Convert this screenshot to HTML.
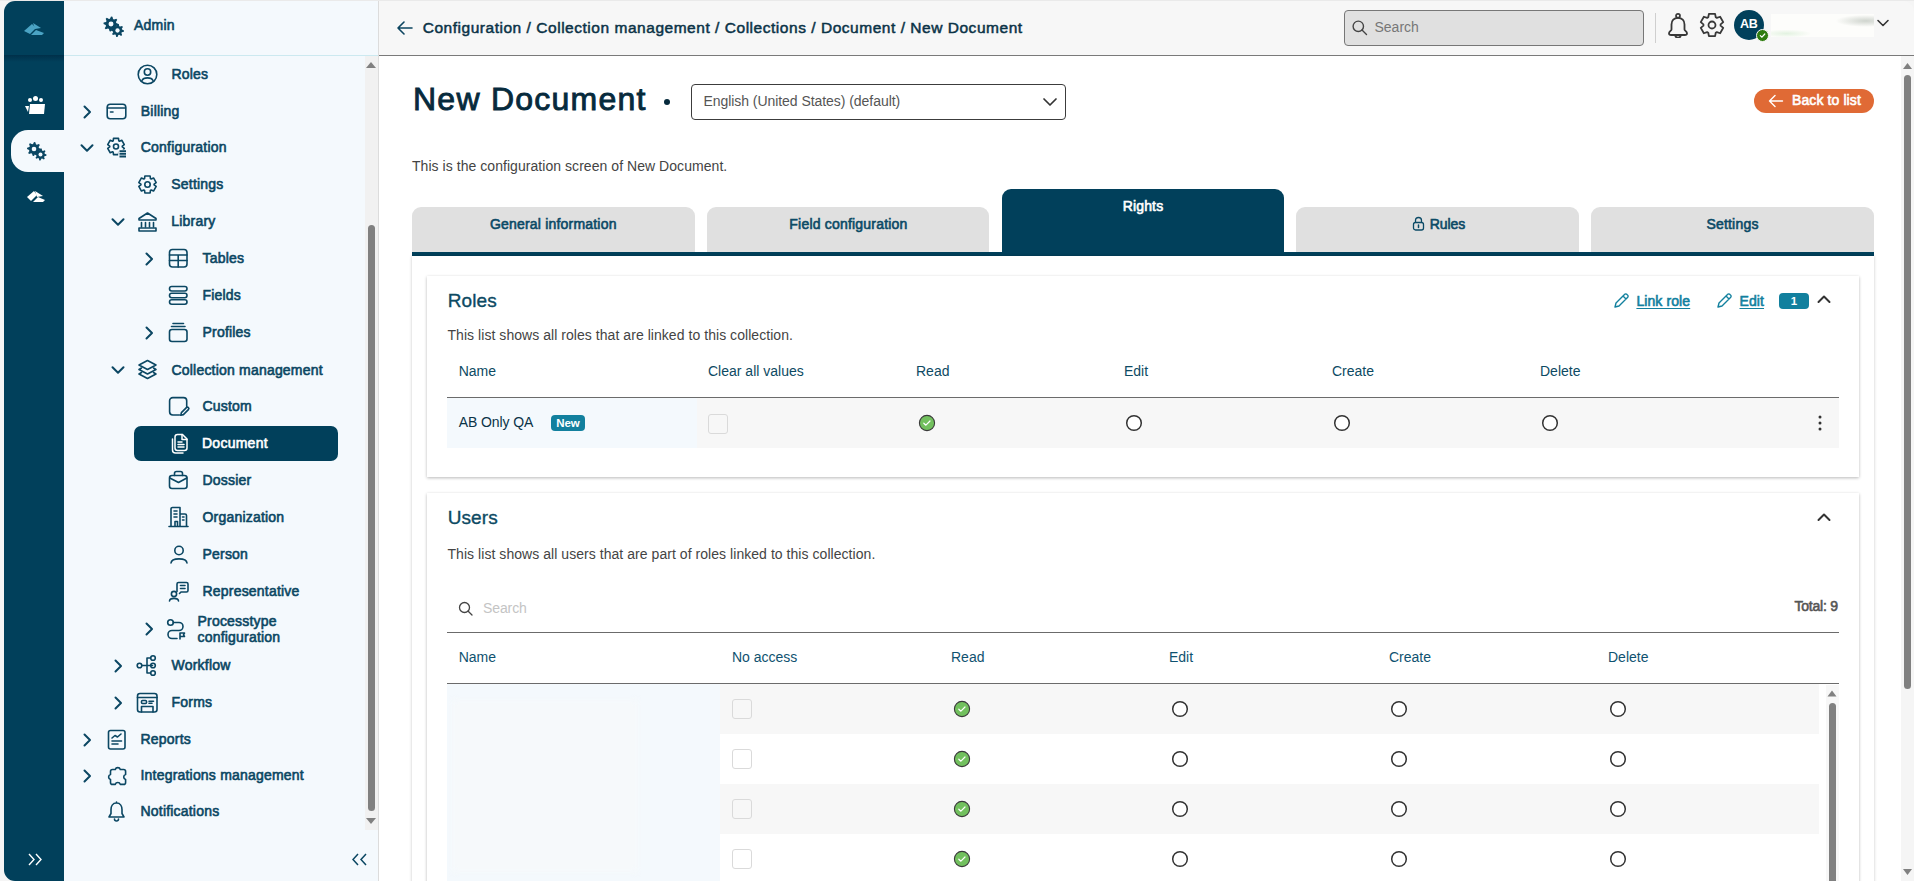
<!DOCTYPE html>
<html><head><meta charset="utf-8"><style>
html,body{margin:0;padding:0;}
body{width:1914px;height:881px;overflow:hidden;position:relative;background:#f5f5f5;font-family:"Liberation Sans", sans-serif;}
.t{position:absolute;white-space:nowrap;}
.r{position:absolute;display:block;}
</style></head><body>
<div class="r" style="left:0px;top:0px;width:1914px;height:1px;background:#eaeaea;"></div><div class="r" style="left:4px;top:1px;width:60px;height:880px;background:#01405b;border-radius:11px 0 0 11px;"></div><div class="r" style="left:4px;top:55px;width:60px;height:7px;background:linear-gradient(#00304a,rgba(1,64,91,0));"></div><div class="r" style="left:64px;top:1px;width:314px;height:880px;background:#f4f9fd;"></div><div class="r" style="left:64px;top:55px;width:314px;height:1px;background:#cce9f0;"></div><div class="r" style="left:378px;top:1px;width:1px;height:880px;background:#dcdcdc;"></div><div class="r" style="left:11px;top:130px;width:53px;height:42px;background:#f4f9fd;border-radius:17px 0 0 17px;"></div><div class="r" style="left:379px;top:1px;width:1535px;height:54px;background:#f7f7f7;border-radius:0 11px 0 0;"></div><div class="r" style="left:379px;top:55px;width:1535px;height:1px;background:#7a7a7a;"></div><div class="r" style="left:379px;top:56px;width:1535px;height:825px;background:#fff;"></div><div class="r" style="left:1901px;top:56px;width:13px;height:825px;background:#f5f5f5;"></div><svg class="r" style="left:1903px;top:63px;" width="9" height="6" viewBox="0 0 9 6"><path d="M4.5 0 L9 6 L0 6Z" fill="#808080"/></svg><div class="r" style="left:1904px;top:75px;width:7px;height:614px;background:#808080;border-radius:4px;"></div><svg class="r" style="left:1903px;top:869px;" width="9" height="6" viewBox="0 0 9 6"><path d="M0 0 L9 0 L4.5 6Z" fill="#808080"/></svg><div class="r" style="left:365px;top:56px;width:13px;height:774px;background:#f1f1f1;"></div><svg class="r" style="left:366px;top:62px;" width="10" height="6" viewBox="0 0 10 6"><path d="M5 0 L10 6 L0 6Z" fill="#808080"/></svg><div class="r" style="left:368px;top:225px;width:7px;height:586px;background:#808080;border-radius:4px;"></div><svg class="r" style="left:366px;top:818px;" width="10" height="6" viewBox="0 0 10 6"><path d="M0 0 L10 0 L5 6Z" fill="#808080"/></svg><svg class="r" style="left:23px;top:22px;" width="22" height="14" viewBox="0 0 22 14"><path d="M1 9 L9 2 L13 6 L7 12Z" fill="#4aa3c4"/><path d="M10 1 L18 6 L12 7Z" fill="#4aa3c4"/><path d="M8 13 L13 8 L21 11 L19 13Z" fill="#4aa3c4"/></svg><svg class="r" style="left:25px;top:96px;" width="21" height="19" viewBox="0 0 21 19"><circle cx="5" cy="4" r="2" fill="#fff"/><circle cx="10.5" cy="2.5" r="2.5" fill="#fff"/><circle cx="16" cy="4" r="2" fill="#fff"/><path d="M5 8 H20 L19 18 H4Z" fill="#fff"/><path d="M0 10 L4 10 L3 16Z" fill="#fff"/></svg><svg class="r" style="left:27px;top:142px;" width="20" height="19" viewBox="0 0 20 19"><polygon points="14.00,7.00 13.87,8.37 11.66,8.93 11.19,9.80 11.95,11.95 10.89,12.82 8.93,11.66 7.98,11.94 7.00,14.00 5.63,13.87 5.07,11.66 4.20,11.19 2.05,11.95 1.18,10.89 2.34,8.93 2.06,7.98 0.00,7.00 0.13,5.63 2.34,5.07 2.81,4.20 2.05,2.05 3.11,1.18 5.07,2.34 6.02,2.06 7.00,0.00 8.37,0.13 8.93,2.34 9.80,2.81 11.95,2.05 12.82,3.11 11.66,5.07 11.94,6.02" fill="#0b4763"/><circle cx="7" cy="7" r="2.31" fill="#f4f9fd"/><polygon points="19.50,12.50 19.38,13.67 17.49,14.15 17.09,14.90 17.74,16.74 16.83,17.49 15.15,16.49 14.34,16.74 13.50,18.50 12.33,18.38 11.85,16.49 11.10,16.09 9.26,16.74 8.51,15.83 9.51,14.15 9.26,13.34 7.50,12.50 7.62,11.33 9.51,10.85 9.91,10.10 9.26,8.26 10.17,7.51 11.85,8.51 12.66,8.26 13.50,6.50 14.67,6.62 15.15,8.51 15.90,8.91 17.74,8.26 18.49,9.17 17.49,10.85 17.74,11.66" fill="#0b4763"/><circle cx="13.5" cy="12.5" r="1.98" fill="#f4f9fd"/></svg><svg class="r" style="left:26px;top:191px;" width="19" height="12" viewBox="0 0 19 12"><path d="M1 6 L8 0 L11 4 L5 10Z" fill="#fff"/><path d="M9 0 L17 5 L11 6Z" fill="#fff"/><path d="M7 11 L12 6 L19 9 L17 11Z" fill="#fff"/></svg><svg class="r" style="left:28px;top:853px;" width="14" height="13" viewBox="0 0 14 13"><path d="M1 1 L6 6.5 L1 12 M8 1 L13 6.5 L8 12" fill="none" stroke="#fff" stroke-width="1.4"/></svg><svg class="r" style="left:352px;top:853px;" width="15" height="13" viewBox="0 0 15 13"><path d="M6 1 L1 6.5 L6 12 M14 1 L9 6.5 L14 12" fill="none" stroke="#0b4763" stroke-width="1.5"/></svg><svg class="r" style="left:103px;top:16px;" width="22" height="21" viewBox="0 0 22 21"><polygon points="15.50,8.00 15.36,9.46 12.99,10.07 12.49,11.00 13.30,13.30 12.17,14.24 10.07,12.99 9.05,13.30 8.00,15.50 6.54,15.36 5.93,12.99 5.00,12.49 2.70,13.30 1.76,12.17 3.01,10.07 2.70,9.05 0.50,8.00 0.64,6.54 3.01,5.93 3.51,5.00 2.70,2.70 3.83,1.76 5.93,3.01 6.95,2.70 8.00,0.50 9.46,0.64 10.07,3.01 11.00,3.51 13.30,2.70 14.24,3.83 12.99,5.93 13.30,6.95" fill="#0b4763"/><circle cx="8" cy="8" r="2.48" fill="#f4f9fd"/><polygon points="21.00,14.50 20.88,15.77 18.82,16.29 18.39,17.10 19.10,19.10 18.11,19.90 16.29,18.82 15.41,19.09 14.50,21.00 13.23,20.88 12.71,18.82 11.90,18.39 9.90,19.10 9.10,18.11 10.18,16.29 9.91,15.41 8.00,14.50 8.12,13.23 10.18,12.71 10.61,11.90 9.90,9.90 10.89,9.10 12.71,10.18 13.59,9.91 14.50,8.00 15.77,8.12 16.29,10.18 17.10,10.61 19.10,9.90 19.90,10.89 18.82,12.71 19.09,13.59" fill="#0b4763"/><circle cx="14.5" cy="14.5" r="2.15" fill="#f4f9fd"/></svg><div class="t" style="left:134px;top:15.15px;font-size:14px;line-height:20px;font-weight:normal;color:#0b4763;letter-spacing:0.2px;-webkit-text-stroke:0.6px #0b4763;">Admin</div><svg class="r" style="left:137px;top:64px;" width="21" height="21" viewBox="0 0 21 21"><circle cx="10.5" cy="10.5" r="9.3" fill="none" stroke="#0b4763" stroke-width="1.6" stroke-linecap="round" stroke-linejoin="round"/><circle cx="10.5" cy="8" r="3.2" fill="none" stroke="#0b4763" stroke-width="1.6" stroke-linecap="round" stroke-linejoin="round"/><path d="M5 16.5 C6.5 13 14.5 13 16 16.5" fill="none" stroke="#0b4763" stroke-width="1.6" stroke-linecap="round" stroke-linejoin="round"/></svg><div class="t" style="left:171.5px;top:64.15px;font-size:14px;line-height:20px;font-weight:normal;color:#0b4763;letter-spacing:0.2px;-webkit-text-stroke:0.6px #0b4763;">Roles</div><svg class="r" style="left:82px;top:104px;" width="10" height="16" viewBox="0 0 10 16"><path d="M2.5 2.5 L8 8 L2.5 13.5" fill="none" stroke="#0b4763" stroke-width="2" stroke-linecap="round" stroke-linejoin="round"/></svg><svg class="r" style="left:106px;top:103px;" width="21" height="17" viewBox="0 0 21 17"><rect x="1.2" y="1.2" width="18.6" height="14.6" rx="3" fill="none" stroke="#0b4763" stroke-width="1.6" stroke-linecap="round" stroke-linejoin="round"/><path d="M1.5 5 H19.5 M4.5 9 H7" fill="none" stroke="#0b4763" stroke-width="1.6" stroke-linecap="round" stroke-linejoin="round"/></svg><div class="t" style="left:140.8px;top:101.15px;font-size:14px;line-height:20px;font-weight:normal;color:#0b4763;letter-spacing:0.2px;-webkit-text-stroke:0.6px #0b4763;">Billing</div><svg class="r" style="left:79px;top:143px;" width="16" height="10" viewBox="0 0 16 10"><path d="M2.5 2.2 L8 7.7 L13.5 2.2" fill="none" stroke="#0b4763" stroke-width="2" stroke-linecap="round" stroke-linejoin="round"/></svg><svg class="r" style="left:106px;top:137px;" width="22" height="21" viewBox="0 0 22 21"><polygon points="7.20,3.85 7.49,1.38 12.51,1.38 12.80,3.85 13.49,4.26 15.78,3.26 18.29,7.62 16.29,9.10 16.29,9.90 18.29,11.38 15.78,15.74 13.49,14.74 12.80,15.15 12.51,17.62 7.49,17.62 7.20,15.15 6.51,14.74 4.22,15.74 1.71,11.38 3.71,9.90 3.71,9.10 1.71,7.62 4.22,3.26 6.51,4.26" fill="none" stroke="#0b4763" stroke-width="1.6" stroke-linecap="round" stroke-linejoin="round"/><circle cx="10" cy="9.5" r="2.5" fill="none" stroke="#0b4763" stroke-width="1.6" stroke-linecap="round" stroke-linejoin="round"/><rect x="12.2" y="12.6" width="10" height="10" fill="#f4f9fd"/><path d="M13.5 14.3 H20 M13.5 16.9 H20 M13.5 19.5 H20" fill="none" stroke="#0b4763" stroke-width="1.9"/></svg><div class="t" style="left:140.8px;top:137.45px;font-size:14px;line-height:20px;font-weight:normal;color:#0b4763;letter-spacing:0.2px;-webkit-text-stroke:0.6px #0b4763;">Configuration</div><svg class="r" style="left:137px;top:174px;" width="21" height="21" viewBox="0 0 21 21"><polygon points="7.57,4.59 7.87,2.00 13.13,2.00 13.43,4.59 14.16,5.01 16.55,3.97 19.18,8.53 17.09,10.08 17.09,10.92 19.18,12.47 16.55,17.03 14.16,15.99 13.43,16.41 13.13,19.00 7.87,19.00 7.57,16.41 6.84,15.99 4.45,17.03 1.82,12.47 3.91,10.92 3.91,10.08 1.82,8.53 4.45,3.97 6.84,5.01" fill="none" stroke="#0b4763" stroke-width="1.6" stroke-linecap="round" stroke-linejoin="round"/><circle cx="10.5" cy="10.5" r="2.7" fill="none" stroke="#0b4763" stroke-width="1.6" stroke-linecap="round" stroke-linejoin="round"/></svg><div class="t" style="left:171.3px;top:174.35px;font-size:14px;line-height:20px;font-weight:normal;color:#0b4763;letter-spacing:0.2px;-webkit-text-stroke:0.6px #0b4763;">Settings</div><svg class="r" style="left:110px;top:217px;" width="16" height="10" viewBox="0 0 16 10"><path d="M2.5 2.2 L8 7.7 L13.5 2.2" fill="none" stroke="#0b4763" stroke-width="2" stroke-linecap="round" stroke-linejoin="round"/></svg><svg class="r" style="left:137px;top:211px;" width="21" height="21" viewBox="0 0 21 21"><path d="M2 7.5 L10.5 2 L19 7.5 V9 H2Z" fill="none" stroke="#0b4763" stroke-width="1.6" stroke-linecap="round" stroke-linejoin="round"/><path d="M4.5 11.5 V16 M8.5 11.5 V16 M12.5 11.5 V16 M16.5 11.5 V16" fill="none" stroke="#0b4763" stroke-width="1.6" stroke-linecap="round" stroke-linejoin="round"/><rect x="2" y="17" width="17" height="3" fill="none" stroke="#0b4763" stroke-width="1.6" stroke-linecap="round" stroke-linejoin="round"/></svg><div class="t" style="left:171.3px;top:211.15px;font-size:14px;line-height:20px;font-weight:normal;color:#0b4763;letter-spacing:0.2px;-webkit-text-stroke:0.6px #0b4763;">Library</div><svg class="r" style="left:144px;top:251px;" width="10" height="16" viewBox="0 0 10 16"><path d="M2.5 2.5 L8 8 L2.5 13.5" fill="none" stroke="#0b4763" stroke-width="2" stroke-linecap="round" stroke-linejoin="round"/></svg><svg class="r" style="left:168px;top:248px;" width="21" height="21" viewBox="0 0 21 21"><rect x="1.5" y="1.5" width="17.5" height="17.5" rx="3" fill="none" stroke="#0b4763" stroke-width="1.6" stroke-linecap="round" stroke-linejoin="round"/><path d="M1.5 7 H19 M1.5 12.5 H19 M10.2 7 V19" fill="none" stroke="#0b4763" stroke-width="1.6" stroke-linecap="round" stroke-linejoin="round"/></svg><div class="t" style="left:202.5px;top:248.15px;font-size:14px;line-height:20px;font-weight:normal;color:#0b4763;letter-spacing:0.2px;-webkit-text-stroke:0.6px #0b4763;">Tables</div><svg class="r" style="left:168px;top:285px;" width="21" height="21" viewBox="0 0 21 21"><rect x="1.5" y="1.5" width="17.5" height="4.5" rx="2.2" fill="none" stroke="#0b4763" stroke-width="1.6" stroke-linecap="round" stroke-linejoin="round"/><rect x="1.5" y="8.2" width="17.5" height="4.5" rx="2.2" fill="none" stroke="#0b4763" stroke-width="1.6" stroke-linecap="round" stroke-linejoin="round"/><rect x="1.5" y="14.8" width="17.5" height="4.5" rx="2.2" fill="none" stroke="#0b4763" stroke-width="1.6" stroke-linecap="round" stroke-linejoin="round"/></svg><div class="t" style="left:202.5px;top:285.15px;font-size:14px;line-height:20px;font-weight:normal;color:#0b4763;letter-spacing:0.2px;-webkit-text-stroke:0.6px #0b4763;">Fields</div><svg class="r" style="left:144px;top:325px;" width="10" height="16" viewBox="0 0 10 16"><path d="M2.5 2.5 L8 8 L2.5 13.5" fill="none" stroke="#0b4763" stroke-width="2" stroke-linecap="round" stroke-linejoin="round"/></svg><svg class="r" style="left:168px;top:322px;" width="21" height="21" viewBox="0 0 21 21"><path d="M5 1.5 H15.5 M3.5 4.5 H17" fill="none" stroke="#0b4763" stroke-width="1.6" stroke-linecap="round" stroke-linejoin="round"/><rect x="1.5" y="7.5" width="17.5" height="12" rx="2.5" fill="none" stroke="#0b4763" stroke-width="1.6" stroke-linecap="round" stroke-linejoin="round"/></svg><div class="t" style="left:202.5px;top:322.15px;font-size:14px;line-height:20px;font-weight:normal;color:#0b4763;letter-spacing:0.2px;-webkit-text-stroke:0.6px #0b4763;">Profiles</div><svg class="r" style="left:110px;top:365px;" width="16" height="10" viewBox="0 0 16 10"><path d="M2.5 2.2 L8 7.7 L13.5 2.2" fill="none" stroke="#0b4763" stroke-width="2" stroke-linecap="round" stroke-linejoin="round"/></svg><svg class="r" style="left:137px;top:359px;" width="21" height="21" viewBox="0 0 21 21"><path d="M10.5 1.5 L19 6 L10.5 10.5 L2 6Z" fill="none" stroke="#0b4763" stroke-width="1.6" stroke-linecap="round" stroke-linejoin="round"/><path d="M4.5 9 L2 10.5 L10.5 15 L19 10.5 L16.5 9" fill="none" stroke="#0b4763" stroke-width="1.6" stroke-linecap="round" stroke-linejoin="round"/><path d="M4.5 13.5 L2 15 L10.5 19.5 L19 15 L16.5 13.5" fill="none" stroke="#0b4763" stroke-width="1.6" stroke-linecap="round" stroke-linejoin="round"/></svg><div class="t" style="left:171.5px;top:359.65px;font-size:14px;line-height:20px;font-weight:normal;color:#0b4763;letter-spacing:0.2px;-webkit-text-stroke:0.6px #0b4763;">Collection management</div><svg class="r" style="left:168px;top:396px;" width="23" height="21" viewBox="0 0 23 21"><path d="M11.5 19 H4.8 A3.2 3.2 0 0 1 1.6 15.8 V4.8 A3.2 3.2 0 0 1 4.8 1.6 H15.5 A3.2 3.2 0 0 1 18.7 4.8 V10.5" fill="none" stroke="#0b4763" stroke-width="1.6" stroke-linecap="round" stroke-linejoin="round"/><path d="M12.8 19.2 L13.4 16.6 L18.4 11.6 A1.4 1.4 0 0 1 20.4 13.6 L15.4 18.6 Z" fill="none" stroke="#0b4763" stroke-width="1.6" stroke-linecap="round" stroke-linejoin="round"/></svg><div class="t" style="left:202.4px;top:396.15px;font-size:14px;line-height:20px;font-weight:normal;color:#0b4763;letter-spacing:0.2px;-webkit-text-stroke:0.6px #0b4763;">Custom</div><div class="r" style="left:134px;top:426px;width:204px;height:35px;background:#01405b;border-radius:7px;"></div><svg class="r" style="left:169px;top:433px;" width="20" height="21" viewBox="0 0 20 21"><path d="M3.5 6 V17 A3 3 0 0 0 6.5 20 H14" fill="none" stroke="#fff" stroke-width="1.5" stroke-linecap="round" stroke-linejoin="round"/><path d="M6 4 A2.5 2.5 0 0 1 8.5 1.5 H13.5 L18 6 V15 A2.5 2.5 0 0 1 15.5 17.5 H8.5 A2.5 2.5 0 0 1 6 15Z" fill="none" stroke="#fff" stroke-width="1.5" stroke-linecap="round" stroke-linejoin="round"/><path d="M13 1.5 V6.5 H18 M9 9 H13 M9 11.5 H15 M9 14 H15" fill="none" stroke="#fff" stroke-width="1.5" stroke-linecap="round" stroke-linejoin="round"/></svg><div class="t" style="left:202px;top:433.15px;font-size:14px;line-height:20px;font-weight:normal;color:#fff;letter-spacing:0.25px;-webkit-text-stroke:0.6px #fff;">Document</div><svg class="r" style="left:168px;top:470px;" width="21" height="20" viewBox="0 0 21 20"><rect x="1.5" y="5.5" width="17.5" height="13" rx="2.5" fill="none" stroke="#0b4763" stroke-width="1.6" stroke-linecap="round" stroke-linejoin="round"/><path d="M6.5 5.5 V3.5 A2 2 0 0 1 8.5 1.5 H12.5 A2 2 0 0 1 14.5 3.5 V5.5 M1.8 8 L10.5 12.5 L18.8 8" fill="none" stroke="#0b4763" stroke-width="1.6" stroke-linecap="round" stroke-linejoin="round"/></svg><div class="t" style="left:202.5px;top:470.15px;font-size:14px;line-height:20px;font-weight:normal;color:#0b4763;letter-spacing:0.2px;-webkit-text-stroke:0.6px #0b4763;">Dossier</div><svg class="r" style="left:168px;top:506px;" width="21" height="22" viewBox="0 0 21 22"><path d="M3 20 V3 A1.5 1.5 0 0 1 4.5 1.5 H12 V20 M12 8 H17 A1.5 1.5 0 0 1 18.5 9.5 V20 M1 20.5 H20 M6 5 H9 M6 8 H9 M6 11 H9 M14.5 11 H16 M14.5 14 H16 M7 20 V15.5 H9.5 V20" fill="none" stroke="#0b4763" stroke-width="1.6" stroke-linecap="round" stroke-linejoin="round"/></svg><div class="t" style="left:202.5px;top:507.15px;font-size:14px;line-height:20px;font-weight:normal;color:#0b4763;letter-spacing:0.2px;-webkit-text-stroke:0.6px #0b4763;">Organization</div><svg class="r" style="left:168px;top:545px;" width="22" height="19" viewBox="0 0 22 19"><circle cx="11" cy="5.5" r="4.2" fill="none" stroke="#0b4763" stroke-width="1.6" stroke-linecap="round" stroke-linejoin="round"/><path d="M3 18 C3.5 12.5 18.5 12.5 19 18" fill="none" stroke="#0b4763" stroke-width="1.6" stroke-linecap="round" stroke-linejoin="round"/></svg><div class="t" style="left:202.5px;top:544.15px;font-size:14px;line-height:20px;font-weight:normal;color:#0b4763;letter-spacing:0.2px;-webkit-text-stroke:0.6px #0b4763;">Person</div><svg class="r" style="left:168px;top:581px;" width="22" height="21" viewBox="0 0 22 21"><circle cx="6" cy="13" r="2.6" fill="none" stroke="#0b4763" stroke-width="1.6" stroke-linecap="round" stroke-linejoin="round"/><path d="M1.5 20 C2 16.5 10 16.5 10.5 20" fill="none" stroke="#0b4763" stroke-width="1.6" stroke-linecap="round" stroke-linejoin="round"/><path d="M9 10.5 V3 A1.5 1.5 0 0 1 10.5 1.5 H18.5 A1.5 1.5 0 0 1 20 3 V9.5 A1.5 1.5 0 0 1 18.5 11 H13 L11.5 12.5 M12.5 4.5 H17 M12.5 7.5 H17" fill="none" stroke="#0b4763" stroke-width="1.6" stroke-linecap="round" stroke-linejoin="round"/></svg><div class="t" style="left:202.5px;top:581.15px;font-size:14px;line-height:20px;font-weight:normal;color:#0b4763;letter-spacing:0.2px;-webkit-text-stroke:0.6px #0b4763;">Representative</div><svg class="r" style="left:144px;top:621px;" width="10" height="16" viewBox="0 0 10 16"><path d="M2.5 2.5 L8 8 L2.5 13.5" fill="none" stroke="#0b4763" stroke-width="2" stroke-linecap="round" stroke-linejoin="round"/></svg><svg class="r" style="left:166px;top:618px;" width="20" height="22" viewBox="0 0 20 22"><circle cx="4.5" cy="4.5" r="2.8" fill="none" stroke="#0b4763" stroke-width="1.6" stroke-linecap="round" stroke-linejoin="round"/><path d="M7.3 4.5 H13 A4 4 0 0 1 13 12.5 H6 A4 4 0 0 0 6 20.5 H11" fill="none" stroke="#0b4763" stroke-width="1.6" stroke-linecap="round" stroke-linejoin="round"/><path d="M14 21 V15 H18.5 L17.5 16.8 L18.5 18.5 H14" fill="none" stroke="#0b4763" stroke-width="1.6" stroke-linecap="round" stroke-linejoin="round"/></svg><div class="t" style="left:197.5px;top:610.75px;font-size:14px;line-height:20px;font-weight:normal;color:#0b4763;letter-spacing:0.2px;-webkit-text-stroke:0.6px #0b4763;">Processtype</div><div class="t" style="left:197.5px;top:626.65px;font-size:14px;line-height:20px;font-weight:normal;color:#0b4763;letter-spacing:0.2px;-webkit-text-stroke:0.6px #0b4763;">configuration</div><svg class="r" style="left:113px;top:658px;" width="10" height="16" viewBox="0 0 10 16"><path d="M2.5 2.5 L8 8 L2.5 13.5" fill="none" stroke="#0b4763" stroke-width="2" stroke-linecap="round" stroke-linejoin="round"/></svg><svg class="r" style="left:136px;top:654px;" width="22" height="23" viewBox="0 0 22 23"><circle cx="3.5" cy="11.5" r="2.3" fill="none" stroke="#0b4763" stroke-width="1.6" stroke-linecap="round" stroke-linejoin="round"/><path d="M5.8 11.5 H16.5 M11 4 V19 M11 4 H14.5 M11 19 H14.5" fill="none" stroke="#0b4763" stroke-width="1.6" stroke-linecap="round" stroke-linejoin="round"/><circle cx="17" cy="4" r="2.3" fill="none" stroke="#0b4763" stroke-width="1.6" stroke-linecap="round" stroke-linejoin="round"/><circle cx="17" cy="11.5" r="2.3" fill="none" stroke="#0b4763" stroke-width="1.6" stroke-linecap="round" stroke-linejoin="round"/><circle cx="17" cy="19" r="2.3" fill="none" stroke="#0b4763" stroke-width="1.6" stroke-linecap="round" stroke-linejoin="round"/></svg><div class="t" style="left:171.6px;top:655.15px;font-size:14px;line-height:20px;font-weight:normal;color:#0b4763;letter-spacing:0.2px;-webkit-text-stroke:0.6px #0b4763;">Workflow</div><svg class="r" style="left:113px;top:695px;" width="10" height="16" viewBox="0 0 10 16"><path d="M2.5 2.5 L8 8 L2.5 13.5" fill="none" stroke="#0b4763" stroke-width="2" stroke-linecap="round" stroke-linejoin="round"/></svg><svg class="r" style="left:136px;top:692px;" width="23" height="21" viewBox="0 0 23 21"><rect x="1.5" y="1.5" width="19.5" height="18.5" rx="2.5" fill="none" stroke="#0b4763" stroke-width="1.6" stroke-linecap="round" stroke-linejoin="round"/><path d="M1.5 5.5 H21" fill="none" stroke="#0b4763" stroke-width="1.6" stroke-linecap="round" stroke-linejoin="round"/><rect x="5.5" y="8.5" width="5" height="3" rx="1" fill="none" stroke="#0b4763" stroke-width="1.6" stroke-linecap="round" stroke-linejoin="round"/><path d="M13 9.2 H17.5 M13 11.2 H16" fill="none" stroke="#0b4763" stroke-width="1.6" stroke-linecap="round" stroke-linejoin="round"/><path d="M5.5 20 V14.5 H17 V20" fill="none" stroke="#0b4763" stroke-width="1.6" stroke-linecap="round" stroke-linejoin="round"/></svg><div class="t" style="left:171.6px;top:692.15px;font-size:14px;line-height:20px;font-weight:normal;color:#0b4763;letter-spacing:0.2px;-webkit-text-stroke:0.6px #0b4763;">Forms</div><svg class="r" style="left:82px;top:732px;" width="10" height="16" viewBox="0 0 10 16"><path d="M2.5 2.5 L8 8 L2.5 13.5" fill="none" stroke="#0b4763" stroke-width="2" stroke-linecap="round" stroke-linejoin="round"/></svg><svg class="r" style="left:107px;top:729px;" width="20" height="22" viewBox="0 0 20 22"><rect x="1.5" y="1.5" width="16.5" height="18.5" rx="2" fill="none" stroke="#0b4763" stroke-width="1.6" stroke-linecap="round" stroke-linejoin="round"/><path d="M5 9 L8 6.5 L10.5 8 L14 5 M5 12 H14.5 M5 15 H11" fill="none" stroke="#0b4763" stroke-width="1.6" stroke-linecap="round" stroke-linejoin="round"/></svg><div class="t" style="left:140.5px;top:729.15px;font-size:14px;line-height:20px;font-weight:normal;color:#0b4763;letter-spacing:0.2px;-webkit-text-stroke:0.6px #0b4763;">Reports</div><svg class="r" style="left:82px;top:768px;" width="10" height="16" viewBox="0 0 10 16"><path d="M2.5 2.5 L8 8 L2.5 13.5" fill="none" stroke="#0b4763" stroke-width="2" stroke-linecap="round" stroke-linejoin="round"/></svg><svg class="r" style="left:106px;top:765px;" width="21" height="21" viewBox="0 0 21 21"><path d="M4.5 6.5 A2 2 0 0 1 6.5 4.5 H9.3 A2.6 2.6 0 0 1 14.3 4.5 H17.6 A2 2 0 0 1 19.6 6.5 V9.5 A2.6 2.6 0 0 0 19.6 14.5 V17.4 A2 2 0 0 1 17.6 19.4 H14.3 A2.6 2.6 0 0 0 9.3 19.4 H6.5 A2 2 0 0 1 4.5 17.4 V14.5 A2.6 2.6 0 0 1 4.5 9.5 Z" fill="none" stroke="#0b4763" stroke-width="1.6" stroke-linecap="round" stroke-linejoin="round"/></svg><div class="t" style="left:140.5px;top:765.15px;font-size:14px;line-height:20px;font-weight:normal;color:#0b4763;letter-spacing:0.2px;-webkit-text-stroke:0.6px #0b4763;">Integrations management</div><svg class="r" style="left:107px;top:801px;" width="19" height="21" viewBox="0 0 19 21"><path d="M9.5 2 C5.5 2 4 5.5 4 8.5 V12.5 L2 16 H17 L15 12.5 V8.5 C15 5.5 13.5 2 9.5 2Z M9.5 2 V1 M7.5 18 A2 2 0 0 0 11.5 18" fill="none" stroke="#0b4763" stroke-width="1.6" stroke-linecap="round" stroke-linejoin="round"/></svg><div class="t" style="left:140.5px;top:801.15px;font-size:14px;line-height:20px;font-weight:normal;color:#0b4763;letter-spacing:0.2px;-webkit-text-stroke:0.6px #0b4763;">Notifications</div><svg class="r" style="left:397px;top:21px;" width="17" height="14" viewBox="0 0 17 14"><path d="M7 1 L1 7 L7 13 M1 7 H15" fill="none" stroke="#0d4560" stroke-width="1.6" stroke-linecap="round" stroke-linejoin="round"/></svg><div class="t" style="left:422.7px;top:16.63px;font-size:15.5px;line-height:22px;font-weight:normal;color:#0b3347;letter-spacing:0.53px;-webkit-text-stroke:0.5px #0b3347;">Configuration / Collection management / Collections / Document / New Document</div><div class="r" style="left:1344px;top:10px;width:300px;height:36px;background:#e0e0e0;border:1px solid #777;border-radius:4px;box-sizing:border-box;"></div><svg class="r" style="left:1352px;top:20px;" width="16" height="16" viewBox="0 0 16 16"><circle cx="6.3" cy="6.3" r="5.2" fill="none" stroke="#444" stroke-width="1.4"/><path d="M10 10 L14.5 14.5" stroke="#444" stroke-width="1.4" stroke-linecap="round"/></svg><div class="t" style="left:1374.5px;top:17.15px;font-size:14px;line-height:20px;font-weight:normal;color:#777;letter-spacing:0px;">Search</div><div class="r" style="left:1655px;top:13px;width:1px;height:30px;background:#cfcfcf;"></div><svg class="r" style="left:1667px;top:12px;" width="22" height="26" viewBox="0 0 22 26"><circle cx="11" cy="3.8" r="2" fill="none" stroke="#383838" stroke-width="1.7"/><path d="M11 5.8 C7 5.8 4.5 8.5 4.5 12.5 V17.5 C4.5 18.5 2 19.5 2 21.2 C2 22.4 3 23 4.2 23 H17.8 C19 23 20 22.4 20 21.2 C20 19.5 17.5 18.5 17.5 17.5 V12.5 C17.5 8.5 15 5.8 11 5.8Z" fill="none" stroke="#383838" stroke-width="1.8" stroke-linejoin="round"/><path d="M8.3 23.2 A2.7 2.4 0 0 0 13.7 23.2" fill="none" stroke="#383838" stroke-width="1.8"/></svg><svg class="r" style="left:1699px;top:12px;" width="26" height="26" viewBox="0 0 26 26"><polygon points="9.26,5.26 9.91,1.82 16.09,1.82 16.74,5.26 17.84,5.89 21.13,4.73 24.23,10.09 21.58,12.37 21.58,13.63 24.23,15.91 21.13,21.27 17.84,20.11 16.74,20.74 16.09,24.18 9.91,24.18 9.26,20.74 8.16,20.11 4.87,21.27 1.77,15.91 4.42,13.63 4.42,12.37 1.77,10.09 4.87,4.73 8.16,5.89" fill="none" stroke="#383838" stroke-width="1.8" stroke-linejoin="round"/><circle cx="13" cy="13" r="3.5" fill="none" stroke="#383838" stroke-width="1.8"/></svg><div class="r" style="left:1734px;top:10px;width:30px;height:30px;background:#01405b;border-radius:50%;"></div><div class="t" style="left:1740px;top:15.27px;font-size:12.5px;line-height:18px;font-weight:bold;color:#fff;letter-spacing:-0.3px;">AB</div><div class="r" style="left:1756px;top:29px;width:13px;height:13px;background:#2e7d0f;border:1.5px solid #f7f7f7;border-radius:50%;box-sizing:border-box;"></div><svg class="r" style="left:1759px;top:32px;" width="7" height="7" viewBox="0 0 7 7"><path d="M1.3 3.6 L2.9 5.2 L5.8 2" fill="none" stroke="#fff" stroke-width="1.2" stroke-linecap="round"/></svg><div class="r" style="left:1771px;top:14px;width:103px;height:23px;background:radial-gradient(ellipse 30px 6px at 92% 30%,rgba(120,135,120,0.35),rgba(0,0,0,0)),radial-gradient(ellipse 25px 4px at 15% 85%,rgba(120,200,120,0.2),rgba(0,0,0,0)),#fdfdfb;"></div><svg class="r" style="left:1876px;top:18px;" width="14" height="10" viewBox="0 0 14 10"><path d="M2 2.5 L7 7.5 L12 2.5" fill="none" stroke="#333" stroke-width="1.6" stroke-linecap="round" stroke-linejoin="round"/></svg><div class="t" style="left:413px;top:76.51px;font-size:32px;line-height:45px;font-weight:normal;color:#062a3c;letter-spacing:1.25px;-webkit-text-stroke:0.9px #062a3c;">New Document</div><div class="r" style="left:663.5px;top:98.8px;width:6.0px;height:6.0px;background:#062a3c;border-radius:50%;"></div><div class="r" style="left:691px;top:84px;width:375px;height:36px;border:1.5px solid #3c3c3c;border-radius:4px;box-sizing:border-box;background:#fff;"></div><div class="t" style="left:703.4px;top:91.45px;font-size:14px;line-height:20px;font-weight:normal;color:#555;letter-spacing:-0.05px;">English (United States) (default)</div><svg class="r" style="left:1042px;top:96px;" width="16" height="12" viewBox="0 0 16 12"><path d="M2 3 L8 9 L14 3" fill="none" stroke="#333" stroke-width="1.7" stroke-linecap="round" stroke-linejoin="round"/></svg><div class="r" style="left:1754px;top:89px;width:120px;height:24px;background:#e06a35;border-radius:12px;"></div><svg class="r" style="left:1768px;top:94px;" width="17" height="14" viewBox="0 0 17 14"><path d="M7 1.5 L1.5 7 L7 12.5 M1.5 7 H14.5" fill="none" stroke="#fff" stroke-width="1.4" stroke-linecap="round" stroke-linejoin="round"/></svg><div class="t" style="left:1792px;top:90.15px;font-size:14px;line-height:20px;font-weight:normal;color:#fff;letter-spacing:0.1px;-webkit-text-stroke:0.6px #fff;">Back to list</div><div class="t" style="left:412px;top:156.35px;font-size:14px;line-height:20px;font-weight:normal;color:#444;letter-spacing:0.05px;">This is the configuration screen of New Document.</div><div class="r" style="left:412px;top:207px;width:282.6px;height:45px;background:#e0e0e0;border-radius:9px 9px 0 0;"></div><div class="r" style="left:707.4px;top:207px;width:282.1px;height:45px;background:#e0e0e0;border-radius:9px 9px 0 0;"></div><div class="r" style="left:1002px;top:189px;width:282px;height:67px;background:#01405b;border-radius:9px 9px 0 0;"></div><div class="r" style="left:1296px;top:207px;width:282.5999999999999px;height:45px;background:#e0e0e0;border-radius:9px 9px 0 0;"></div><div class="r" style="left:1591px;top:207px;width:283px;height:45px;background:#e0e0e0;border-radius:9px 9px 0 0;"></div><div class="r" style="left:412px;top:252px;width:1462px;height:4px;background:#01405b;"></div><div class="t" style="left:253.29999999999995px;width:600px;text-align:center;top:214.45px;font-size:14px;line-height:20px;font-weight:normal;color:#0b4a66;letter-spacing:0.2px;-webkit-text-stroke:0.6px #0b4a66;">General information</div><div class="t" style="left:548.45px;width:600px;text-align:center;top:214.45px;font-size:14px;line-height:20px;font-weight:normal;color:#0b4a66;letter-spacing:0.2px;-webkit-text-stroke:0.6px #0b4a66;">Field configuration</div><div class="t" style="left:843px;width:600px;text-align:center;top:196.45px;font-size:14px;line-height:20px;font-weight:normal;color:#fff;letter-spacing:0.15px;-webkit-text-stroke:0.6px #fff;">Rights</div><svg class="r" style="left:1412px;top:216px;" width="13" height="15" viewBox="0 0 13 15"><path d="M3.5 6.5 V4.5 A3 3 0 0 1 9.5 4.5 V6.5" fill="none" stroke="#0b4a66" stroke-width="1.3"/><rect x="1.5" y="6.5" width="10" height="7.5" rx="2" fill="none" stroke="#0b4a66" stroke-width="1.3"/><path d="M6.5 9 V11.5" stroke="#0b4a66" stroke-width="1.5" stroke-linecap="round"/></svg><div class="t" style="left:1429.8px;top:214.05px;font-size:14px;line-height:20px;font-weight:normal;color:#0b4a66;letter-spacing:-0.1px;-webkit-text-stroke:0.6px #0b4a66;">Rules</div><div class="t" style="left:1432.5px;width:600px;text-align:center;top:214.05px;font-size:14px;line-height:20px;font-weight:normal;color:#0b4a66;letter-spacing:0.2px;-webkit-text-stroke:0.6px #0b4a66;">Settings</div><div class="r" style="left:412px;top:256px;width:1462px;height:644px;background:#fff;box-shadow:0 0 3px rgba(0,0,0,0.22);"></div><div class="r" style="left:427px;top:276px;width:1432px;height:201px;background:#fff;box-shadow:0 1px 3px rgba(0,0,0,0.28);"></div><div class="t" style="left:447.7px;top:287.22px;font-size:19px;line-height:27px;font-weight:normal;color:#0d4a63;letter-spacing:0.1px;-webkit-text-stroke:0.35px #0d4a63;">Roles</div><div class="t" style="left:447.5px;top:324.85px;font-size:14px;line-height:20px;font-weight:normal;color:#444;letter-spacing:0.05px;">This list shows all roles that are linked to this collection.</div><svg class="r" style="left:1613px;top:292px;" width="17" height="17" viewBox="0 0 17 17"><path d="M2 15 L3 11 L11.5 2.5 A1.6 1.6 0 0 1 14 2.5 L14.5 3 A1.6 1.6 0 0 1 14.5 5.5 L6 14 Z M10 4 L13 7" fill="none" stroke="#12809e" stroke-width="1.4" stroke-linejoin="round"/></svg><div class="t" style="left:1636.4px;top:290.65px;font-size:14px;line-height:20px;font-weight:normal;color:#12809e;letter-spacing:0.1px;-webkit-text-stroke:0.6px #12809e;text-decoration:underline;text-underline-offset:2px;">Link role</div><svg class="r" style="left:1716px;top:292px;" width="17" height="17" viewBox="0 0 17 17"><path d="M2 15 L3 11 L11.5 2.5 A1.6 1.6 0 0 1 14 2.5 L14.5 3 A1.6 1.6 0 0 1 14.5 5.5 L6 14 Z M10 4 L13 7" fill="none" stroke="#12809e" stroke-width="1.4" stroke-linejoin="round"/></svg><div class="t" style="left:1739.5px;top:290.65px;font-size:14px;line-height:20px;font-weight:normal;color:#12809e;letter-spacing:0.1px;-webkit-text-stroke:0.6px #12809e;text-decoration:underline;text-underline-offset:2px;">Edit</div><div class="r" style="left:1779px;top:293px;width:30px;height:16px;background:#12809e;border-radius:4px;"></div><div class="t" style="left:1494px;width:600px;text-align:center;top:293.02px;font-size:11.5px;line-height:16px;font-weight:bold;color:#fff;letter-spacing:0px;">1</div><svg class="r" style="left:1816px;top:292px;" width="16" height="14" viewBox="0 0 16 14"><path d="M2.5 10 L8 4.5 L13.5 10" fill="none" stroke="#333" stroke-width="2" stroke-linecap="round" stroke-linejoin="round"/></svg><div class="t" style="left:458.7px;top:361.15px;font-size:14px;line-height:20px;font-weight:normal;color:#0d4a63;letter-spacing:0px;">Name</div><div class="t" style="left:708px;top:361.15px;font-size:14px;line-height:20px;font-weight:normal;color:#0d4a63;letter-spacing:0px;">Clear all values</div><div class="t" style="left:916px;top:361.15px;font-size:14px;line-height:20px;font-weight:normal;color:#0d4a63;letter-spacing:0px;">Read</div><div class="t" style="left:1124px;top:361.15px;font-size:14px;line-height:20px;font-weight:normal;color:#0d4a63;letter-spacing:0px;">Edit</div><div class="t" style="left:1332px;top:361.15px;font-size:14px;line-height:20px;font-weight:normal;color:#0d4a63;letter-spacing:0px;">Create</div><div class="t" style="left:1540px;top:361.15px;font-size:14px;line-height:20px;font-weight:normal;color:#0d4a63;letter-spacing:0px;">Delete</div><div class="r" style="left:447px;top:397px;width:1392px;height:1px;background:#6b6b6b;"></div><div class="r" style="left:447px;top:398px;width:250px;height:50px;background:#f4f9fd;"></div><div class="r" style="left:697px;top:398px;width:1142px;height:50px;background:#f7f7f7;"></div><div class="t" style="left:458.7px;top:412.15px;font-size:14px;line-height:20px;font-weight:normal;color:#0b3347;letter-spacing:-0.1px;">AB Only QA</div><div class="r" style="left:551px;top:415px;width:34px;height:16px;background:#12809e;border-radius:4px;"></div><div class="t" style="left:268px;width:600px;text-align:center;top:415.02px;font-size:11.5px;line-height:16px;font-weight:bold;color:#fff;letter-spacing:-0.1px;">New</div><div class="r" style="left:708px;top:414px;width:20px;height:20px;border:1px solid #dadada;border-radius:3px;box-sizing:border-box;"></div><svg class="r" style="left:918px;top:414px;" width="18" height="18" viewBox="0 0 18 18"><circle cx="9" cy="9" r="7.6" fill="#72c05e" stroke="#3a3a3a" stroke-width="1.1"/><path d="M5.8 9.2 L7.9 11.2 L12 7" fill="none" stroke="#fff" stroke-width="1.2" stroke-linecap="round" stroke-linejoin="round"/></svg><svg class="r" style="left:1125px;top:414px;" width="18" height="18" viewBox="0 0 18 18"><circle cx="9" cy="9" r="7.3" fill="#fff" stroke="#333" stroke-width="1.5"/></svg><svg class="r" style="left:1333px;top:414px;" width="18" height="18" viewBox="0 0 18 18"><circle cx="9" cy="9" r="7.3" fill="#fff" stroke="#333" stroke-width="1.5"/></svg><svg class="r" style="left:1541px;top:414px;" width="18" height="18" viewBox="0 0 18 18"><circle cx="9" cy="9" r="7.3" fill="#fff" stroke="#333" stroke-width="1.5"/></svg><svg class="r" style="left:1815px;top:413px;" width="10" height="20" viewBox="0 0 10 20"><circle cx="5" cy="4" r="1.5" fill="#333"/><circle cx="5" cy="10" r="1.5" fill="#333"/><circle cx="5" cy="16" r="1.5" fill="#333"/></svg><div class="r" style="left:427px;top:493px;width:1432px;height:407px;background:#fff;box-shadow:0 1px 3px rgba(0,0,0,0.28);"></div><div class="t" style="left:447.7px;top:503.82px;font-size:19px;line-height:27px;font-weight:normal;color:#0d4a63;letter-spacing:0.1px;-webkit-text-stroke:0.35px #0d4a63;">Users</div><svg class="r" style="left:1816px;top:510px;" width="16" height="14" viewBox="0 0 16 14"><path d="M2.5 10 L8 4.5 L13.5 10" fill="none" stroke="#333" stroke-width="2" stroke-linecap="round" stroke-linejoin="round"/></svg><div class="t" style="left:447.5px;top:544.15px;font-size:14px;line-height:20px;font-weight:normal;color:#444;letter-spacing:0.05px;">This list shows all users that are part of roles linked to this collection.</div><svg class="r" style="left:458px;top:601px;" width="16" height="16" viewBox="0 0 16 16"><circle cx="6.5" cy="6.5" r="5" fill="none" stroke="#444" stroke-width="1.3"/><path d="M10.2 10.2 L14 14" stroke="#444" stroke-width="1.3" stroke-linecap="round"/></svg><div class="t" style="left:483px;top:598.15px;font-size:14px;line-height:20px;font-weight:normal;color:#c4c4c4;letter-spacing:-0.1px;">Search</div><div class="t" style="left:1794.4px;top:596.45px;font-size:14px;line-height:20px;font-weight:normal;color:#555;letter-spacing:-0.2px;-webkit-text-stroke:0.6px #555;">Total: 9</div><div class="r" style="left:447px;top:632px;width:1392px;height:1px;background:#6b6b6b;"></div><div class="t" style="left:458.7px;top:647.15px;font-size:14px;line-height:20px;font-weight:normal;color:#0f5270;letter-spacing:0px;">Name</div><div class="t" style="left:732px;top:647.15px;font-size:14px;line-height:20px;font-weight:normal;color:#0f5270;letter-spacing:0px;">No access</div><div class="t" style="left:951px;top:647.15px;font-size:14px;line-height:20px;font-weight:normal;color:#0f5270;letter-spacing:0px;">Read</div><div class="t" style="left:1169px;top:647.15px;font-size:14px;line-height:20px;font-weight:normal;color:#0f5270;letter-spacing:0px;">Edit</div><div class="t" style="left:1389px;top:647.15px;font-size:14px;line-height:20px;font-weight:normal;color:#0f5270;letter-spacing:0px;">Create</div><div class="t" style="left:1608px;top:647.15px;font-size:14px;line-height:20px;font-weight:normal;color:#0f5270;letter-spacing:0px;">Delete</div><div class="r" style="left:447px;top:683px;width:1392px;height:1px;background:#6b6b6b;"></div><div class="r" style="left:447px;top:684px;width:273px;height:197px;background:#f4f9fd;"></div><div class="r" style="left:452px;top:700px;width:186px;height:172px;background:#f6f9fb;filter:blur(3px);"></div><div class="r" style="left:720px;top:684px;width:1099px;height:50px;background:#f7f7f7;"></div><div class="r" style="left:732px;top:699px;width:20px;height:20px;border:1px solid #dadada;border-radius:3px;box-sizing:border-box;"></div><svg class="r" style="left:953px;top:700px;" width="18" height="18" viewBox="0 0 18 18"><circle cx="9" cy="9" r="7.6" fill="#72c05e" stroke="#3a3a3a" stroke-width="1.1"/><path d="M5.8 9.2 L7.9 11.2 L12 7" fill="none" stroke="#fff" stroke-width="1.2" stroke-linecap="round" stroke-linejoin="round"/></svg><svg class="r" style="left:1171px;top:700px;" width="18" height="18" viewBox="0 0 18 18"><circle cx="9" cy="9" r="7.3" fill="#fff" stroke="#333" stroke-width="1.5"/></svg><svg class="r" style="left:1390px;top:700px;" width="18" height="18" viewBox="0 0 18 18"><circle cx="9" cy="9" r="7.3" fill="#fff" stroke="#333" stroke-width="1.5"/></svg><svg class="r" style="left:1609px;top:700px;" width="18" height="18" viewBox="0 0 18 18"><circle cx="9" cy="9" r="7.3" fill="#fff" stroke="#333" stroke-width="1.5"/></svg><div class="r" style="left:720px;top:734px;width:1099px;height:50px;background:#fff;"></div><div class="r" style="left:732px;top:749px;width:20px;height:20px;border:1px solid #dadada;border-radius:3px;box-sizing:border-box;"></div><svg class="r" style="left:953px;top:750px;" width="18" height="18" viewBox="0 0 18 18"><circle cx="9" cy="9" r="7.6" fill="#72c05e" stroke="#3a3a3a" stroke-width="1.1"/><path d="M5.8 9.2 L7.9 11.2 L12 7" fill="none" stroke="#fff" stroke-width="1.2" stroke-linecap="round" stroke-linejoin="round"/></svg><svg class="r" style="left:1171px;top:750px;" width="18" height="18" viewBox="0 0 18 18"><circle cx="9" cy="9" r="7.3" fill="#fff" stroke="#333" stroke-width="1.5"/></svg><svg class="r" style="left:1390px;top:750px;" width="18" height="18" viewBox="0 0 18 18"><circle cx="9" cy="9" r="7.3" fill="#fff" stroke="#333" stroke-width="1.5"/></svg><svg class="r" style="left:1609px;top:750px;" width="18" height="18" viewBox="0 0 18 18"><circle cx="9" cy="9" r="7.3" fill="#fff" stroke="#333" stroke-width="1.5"/></svg><div class="r" style="left:720px;top:784px;width:1099px;height:50px;background:#f7f7f7;"></div><div class="r" style="left:732px;top:799px;width:20px;height:20px;border:1px solid #dadada;border-radius:3px;box-sizing:border-box;"></div><svg class="r" style="left:953px;top:800px;" width="18" height="18" viewBox="0 0 18 18"><circle cx="9" cy="9" r="7.6" fill="#72c05e" stroke="#3a3a3a" stroke-width="1.1"/><path d="M5.8 9.2 L7.9 11.2 L12 7" fill="none" stroke="#fff" stroke-width="1.2" stroke-linecap="round" stroke-linejoin="round"/></svg><svg class="r" style="left:1171px;top:800px;" width="18" height="18" viewBox="0 0 18 18"><circle cx="9" cy="9" r="7.3" fill="#fff" stroke="#333" stroke-width="1.5"/></svg><svg class="r" style="left:1390px;top:800px;" width="18" height="18" viewBox="0 0 18 18"><circle cx="9" cy="9" r="7.3" fill="#fff" stroke="#333" stroke-width="1.5"/></svg><svg class="r" style="left:1609px;top:800px;" width="18" height="18" viewBox="0 0 18 18"><circle cx="9" cy="9" r="7.3" fill="#fff" stroke="#333" stroke-width="1.5"/></svg><div class="r" style="left:720px;top:834px;width:1099px;height:50px;background:#fff;"></div><div class="r" style="left:732px;top:849px;width:20px;height:20px;border:1px solid #dadada;border-radius:3px;box-sizing:border-box;"></div><svg class="r" style="left:953px;top:850px;" width="18" height="18" viewBox="0 0 18 18"><circle cx="9" cy="9" r="7.6" fill="#72c05e" stroke="#3a3a3a" stroke-width="1.1"/><path d="M5.8 9.2 L7.9 11.2 L12 7" fill="none" stroke="#fff" stroke-width="1.2" stroke-linecap="round" stroke-linejoin="round"/></svg><svg class="r" style="left:1171px;top:850px;" width="18" height="18" viewBox="0 0 18 18"><circle cx="9" cy="9" r="7.3" fill="#fff" stroke="#333" stroke-width="1.5"/></svg><svg class="r" style="left:1390px;top:850px;" width="18" height="18" viewBox="0 0 18 18"><circle cx="9" cy="9" r="7.3" fill="#fff" stroke="#333" stroke-width="1.5"/></svg><svg class="r" style="left:1609px;top:850px;" width="18" height="18" viewBox="0 0 18 18"><circle cx="9" cy="9" r="7.3" fill="#fff" stroke="#333" stroke-width="1.5"/></svg><div class="r" style="left:1826px;top:685px;width:13px;height:196px;background:#f7f7f7;"></div><svg class="r" style="left:1827px;top:690px;" width="10" height="7" viewBox="0 0 10 7"><path d="M5 0.5 L9.5 6.5 L0.5 6.5Z" fill="#808080"/></svg><div class="r" style="left:1829px;top:703px;width:7px;height:187px;background:#808080;border-radius:4px;"></div>
</body></html>
